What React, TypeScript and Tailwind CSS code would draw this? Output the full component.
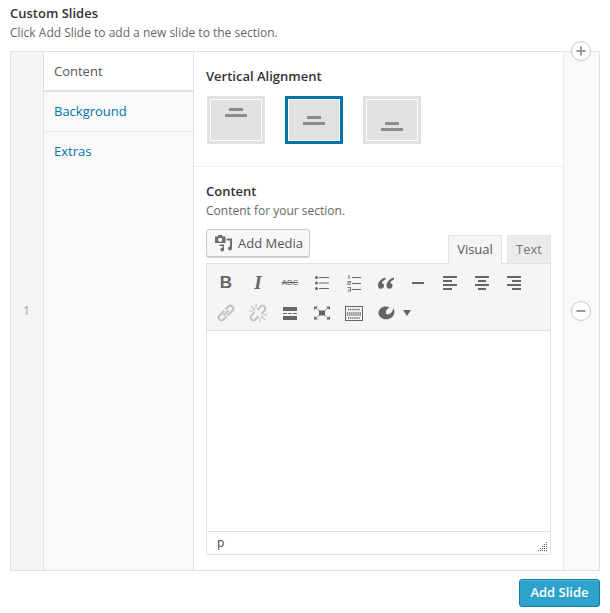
const font = "font-['Open_Sans',sans-serif]";

const AlignButton = ({ pos, active }: { pos: "top" | "middle" | "bottom"; active?: boolean }) => {
  const offset = pos === "top" ? "pt-[8px]" : pos === "middle" ? "pt-[16px]" : "pt-[22px]";
  return (
    <div className={`h-12 w-[58px] border-[3px] ${active ? "border-[#0073aa]" : "border-[#e1e1e1]"}`}>
      <div className={`flex h-full flex-col items-center border border-white bg-[#e1e1e1] ${offset}`}>
        <div className="h-[3px] w-[14px] bg-[#8c8c8c]"></div>
        <div className="mt-[3px] h-[3px] w-[22px] bg-[#8c8c8c]"></div>
      </div>
    </div>
  );
};

const Ico = ({ children, muted }: { children: React.ReactNode; muted?: boolean }) => (
  <svg width="20" height="20" viewBox="0 0 20 20" fill={muted ? "#c4c4c4" : "#666"} stroke="none">
    {children}
  </svg>
);

const Cell = ({ children, w = "w-8" }: { children: React.ReactNode; w?: string }) => (
  <div className={`flex h-[30px] shrink-0 items-center justify-center ${w}`}>{children}</div>
);

const Lines = ({ rows }: { rows: number[][] }) => (
  <Ico>
    {rows.map((r, i) => (
      <rect key={i} x={r[0]} y={r[1]} width={r[2]} height={r[3] ?? 2} />
    ))}
  </Ico>
);

const Toolbar = () => (
  <div className="border-b border-[#e1e1e1] bg-[#f5f5f5] px-[3px] pt-[4px] pb-[2px]">
    <div className="flex">
      <Cell>
        <span className="font-['Liberation_Sans',sans-serif] text-[17px] font-bold text-[#666]">B</span>
      </Cell>
      <Cell>
        <span className="font-['Liberation_Serif',serif] text-[19px] font-bold text-[#666] italic">I</span>
      </Cell>
      <Cell>
        <span className="font-['Liberation_Sans',sans-serif] text-[8px] text-[#666] line-through">ABC</span>
      </Cell>
      <Cell>
        <svg width="20" height="20" viewBox="0 0 20 20" fill="#666">
          <circle cx="4.500" cy="4.500" r="1.500" />
          <circle cx="4.500" cy="10" r="1.500" />
          <circle cx="4.500" cy="15.500" r="1.500" />
          <rect x="7" y="4" width="10" height="1" />
          <rect x="7" y="9.500" width="10" height="1" />
          <rect x="7" y="15" width="10" height="1" />
        </svg>
      </Cell>
      <Cell>
        <svg width="20" height="20" viewBox="0 0 20 20" fill="#666">
          <rect x="8" y="4" width="9" height="1" />
          <rect x="8" y="10" width="9" height="1" />
          <rect x="8" y="16" width="9" height="1" />
          <rect x="4.500" y="2" width="1" height="4" />
          <path d="M3.500 8H7v2.200H4.500V11H7v.7H3.500V9.500H6v-.8H3.500zM3.500 14H7v4.500H3.500v-.7H6v-1.200H4v-.7h2v-1.200H3.500z" />
        </svg>
      </Cell>
      <Cell>
        <Ico>
          <path d="M9.500 4.500C5.500 5.500 2 8.500 2 12.500c0 2.200 1.100 3.300 2.800 3.300 1.900 0 3.200-1.300 3.200-3 0-1.600-1-2.600-2.300-2.800.4-1.500 2-2.800 3.800-3.500zM18 4.500c-4 1-7.500 4-7.500 8 0 2.200 1.100 3.300 2.800 3.300 1.900 0 3.200-1.300 3.200-3 0-1.600-1-2.600-2.300-2.800.4-1.500 2-2.800 3.800-3.500z" />
        </Ico>
      </Cell>
      <Cell>
        <Lines rows={[[4, 9, 12, 2]]} />
      </Cell>
      <Cell>
        <Lines rows={[[3, 3, 14, 2], [3, 7, 9, 2], [3, 11, 14, 2], [3, 15, 9, 2]]} />
      </Cell>
      <Cell>
        <Lines rows={[[3, 3, 14, 2], [6, 7, 8, 2], [3, 11, 14, 2], [6, 15, 8, 2]]} />
      </Cell>
      <Cell>
        <Lines rows={[[3, 3, 14, 2], [8, 7, 9, 2], [3, 11, 14, 2], [8, 15, 9, 2]]} />
      </Cell>
    </div>
    <div className="flex">
      <Cell>
        <svg width="20" height="20" viewBox="0 0 20 20" fill="none" stroke="#c4c4c4" strokeWidth="2.200">
          <path d="M8.500 7.500 3.500 12.500a2.800 2.800 0 0 0 4 4l3-3" />
          <path d="M11.500 12.500l5-5a2.800 2.800 0 0 0-4-4l-3 3" />
          <path d="m7.500 12.500 5-5" />
        </svg>
      </Cell>
      <Cell>
        <svg width="20" height="20" viewBox="0 0 20 20" fill="none" stroke="#c4c4c4" strokeWidth="2">
          <path d="M6.500 9 3.500 12.500a2.800 2.800 0 0 0 4 4l3-3.500" />
          <path d="M13.500 11l3-3.500a2.800 2.800 0 0 0-4-4l-3 3.500" />
          <path d="M3 3l4 4M17 17l-4-4M8 1v4M12 19v-4M1 8h4M19 12h-4" strokeWidth="1.200" />
        </svg>
      </Cell>
      <Cell>
        <Lines rows={[[3, 4, 14, 4], [3, 10, 4, 1], [8, 10, 4, 1], [13, 10, 4, 1], [3, 13, 14, 4]]} />
      </Cell>
      <Cell>
        <svg width="20" height="20" viewBox="0 0 20 20" fill="#666" stroke="#666">
          <rect x="7" y="7.500" width="6" height="5" stroke="none" />
          <path d="M4 5l12 10M16 5 4 15" strokeWidth="0.700" />
          <path d="M2 3.500h4L2 7zM18 3.500h-4L18 7zM2 16.500h4L2 13zM18 16.500h-4L18 13z" stroke="none" />
        </svg>
      </Cell>
      <Cell>
        <svg width="20" height="20" viewBox="0 0 20 20" fill="none" stroke="#666">
          <rect x="1.500" y="3.500" width="17" height="14" />
          <path d="M4 6.500h12M3 10h14M3 12h14M4 15h12" strokeWidth="1.300" strokeDasharray="1.300 .8" />
        </svg>
      </Cell>
      <Cell>
        <Ico>
          <path d="M9.500 3.500c1.500 0 3 .4 4.200 1.100-2 .6-3.800 2.400-3.800 4.600 0 1.700 1.300 2.600 2.900 2.100 2.200-.7 4-3.200 4.700-6 .6 1.200.9 2.400.9 3.700 0 4.300-3.900 7.300-8 7.300-4.200 0-7.900-2.700-7.900-6.400 0-3.800 3.500-6.400 7-6.400z" />
        </Ico>
      </Cell>
      <Cell w="w-[10px]">
        <div className="h-0 w-0 border-x-[4px] border-t-[6px] border-x-transparent border-t-[#666]"></div>
      </Cell>
    </div>
  </div>
);

const Editor = () => (
  <div>
    <div className="flex h-[34px] items-start justify-between">
      <button className="flex h-[28px] w-[104px] items-center rounded-[3px] border border-[#cccccc] bg-[#f7f7f7] pl-[8px] text-[13px] text-[#555] shadow-[0_1px_0_#cccccc]">
        <svg width="18" height="18" viewBox="0 0 18 18" fill="#6e6e6e">
          <path d="M0 2.500h2.500l1-1.500h3.500l1 1.500H10.500V9H0zm5.200 1.200a2.100 2.100 0 1 0 0 4.200 2.100 2.100 0 0 0 0-4.200z" />
          <path d="M11.500 4.500H17v10a2 2 0 1 1-2-2V6.500h-3.500zM4.500 10.500H9v5a1.800 1.800 0 1 1-1.500-1.700V12H4.500z" />
        </svg>
        <span className="ml-[5px] leading-none">Add Media</span>
      </button>
      <div className="mt-[6px] flex items-end">
        <div className="z-10 -mb-px flex h-[29px] w-[54px] items-center justify-center border border-b-0 border-[#e1e1e1] bg-[#f5f5f5] text-[13px] text-[#555]">
          Visual
        </div>
        <div className="ml-[5px] flex h-[28px] w-[44px] items-center justify-center border border-b-0 border-[#e5e5e5] bg-[#ebebeb] text-[13px] text-[#777]">
          Text
        </div>
      </div>
    </div>
    <div className="border border-[#e1e1e1]">
      <Toolbar />
      <div className="h-[200px] bg-white"></div>
      <div className="relative flex h-[23px] items-center border-t border-[#e1e1e1] pl-[10px] text-[12px] text-[#444]">
        p
        <svg className="absolute right-[2px] bottom-[2px]" width="10" height="10" viewBox="0 0 10 10" fill="#555">
          {[[8, 0], [6, 2], [8, 2], [4, 4], [6, 4], [8, 4], [2, 6], [4, 6], [6, 6], [8, 6], [0, 8], [2, 8], [4, 8], [6, 8], [8, 8]].map(
            ([x, y]) => (
              <rect key={`${x}-${y}`} x={x} y={y} width="1" height="1" />
            ),
          )}
        </svg>
      </div>
    </div>
  </div>
);

const RoundBtn = ({ minus, className }: { minus?: boolean; className: string }) => (
  <div className={`absolute flex h-5 w-5 items-center justify-center rounded-full border border-[#c8c8c8] bg-white ${className}`}>
    <svg width="10" height="10" viewBox="0 0 10 10" fill="#999">
      <rect x="0.500" y="4" width="9" height="2" />
      {!minus && <rect x="4" y="0.500" width="2" height="9" />}
    </svg>
  </div>
);

export default function App() {
  return (
    <div className={`h-[613px] w-[610px] bg-white px-[10px] pt-[4px] ${font}`}>
      <div className="h-[19px] text-[13px] leading-[18px] font-semibold text-[#333]">Custom Slides</div>
      <div className="h-[28px] pt-[1px] text-[12px] leading-[18px] text-[#666]">
        Click Add Slide to add a new slide to the section.
      </div>
      <div className="relative flex h-[520px] border border-[#e1e1e1]">
        <div className="flex w-[33px] shrink-0 items-center justify-center border-r border-[#e1e1e1] bg-[#f5f5f5] pr-[1px] text-[13px] text-[#b0aa9c]">
          1
        </div>
        <div className="w-[150px] shrink-0 border-r border-[#e1e1e1] bg-[#f9f9f9] text-[13px]">
          <div className="flex h-[40px] items-center border-b-2 border-[#e1e1e1] bg-white pt-[1px] pl-[10px] text-[#555]">Content</div>
          <div className="flex h-[40px] items-center border-b border-[#e8e8e8] pl-[10px] text-[#0073aa]">Background</div>
          <div className="flex h-[40px] items-center pb-[1px] pl-[10px] text-[#0073aa]">Extras</div>
        </div>
        <div className="min-w-0 flex-1 bg-white">
          <div className="h-[115px] border-b border-[#eeeeee] pt-[15px] pr-[12px] pl-[12px]">
            <div className="text-[13px] leading-[18px] font-semibold text-[#333]">Vertical Alignment</div>
            <div className="mt-[11px] ml-[1px] flex gap-5">
              <AlignButton pos="top" />
              <AlignButton pos="middle" active />
              <AlignButton pos="bottom" />
            </div>
          </div>
          <div className="pt-[15px] pr-[12px] pl-[12px]">
            <div className="text-[13px] leading-[18px] font-semibold text-[#333]">Content</div>
            <div className="mt-[2px] mb-[9px] text-[12px] leading-[18px] text-[#666]">Content for your section.</div>
            <Editor />
          </div>
        </div>
        <div className="w-[36px] shrink-0 border-l border-[#e8e8e8] bg-[#f9f9f9]"></div>
        <RoundBtn className="top-[-11px] right-[8px]" />
        <RoundBtn minus className="top-[249px] right-[8px]" />
      </div>
      <div className="mt-[8px] flex justify-end">
        <button className="h-[28px] w-[81px] rounded-[3px] border border-[#0c7fa8] bg-[#2ea2cc] text-[13px] font-semibold text-white shadow-[inset_0_1px_0_rgba(120,200,230,0.5)]">
          Add Slide
        </button>
      </div>
    </div>
  );
}
